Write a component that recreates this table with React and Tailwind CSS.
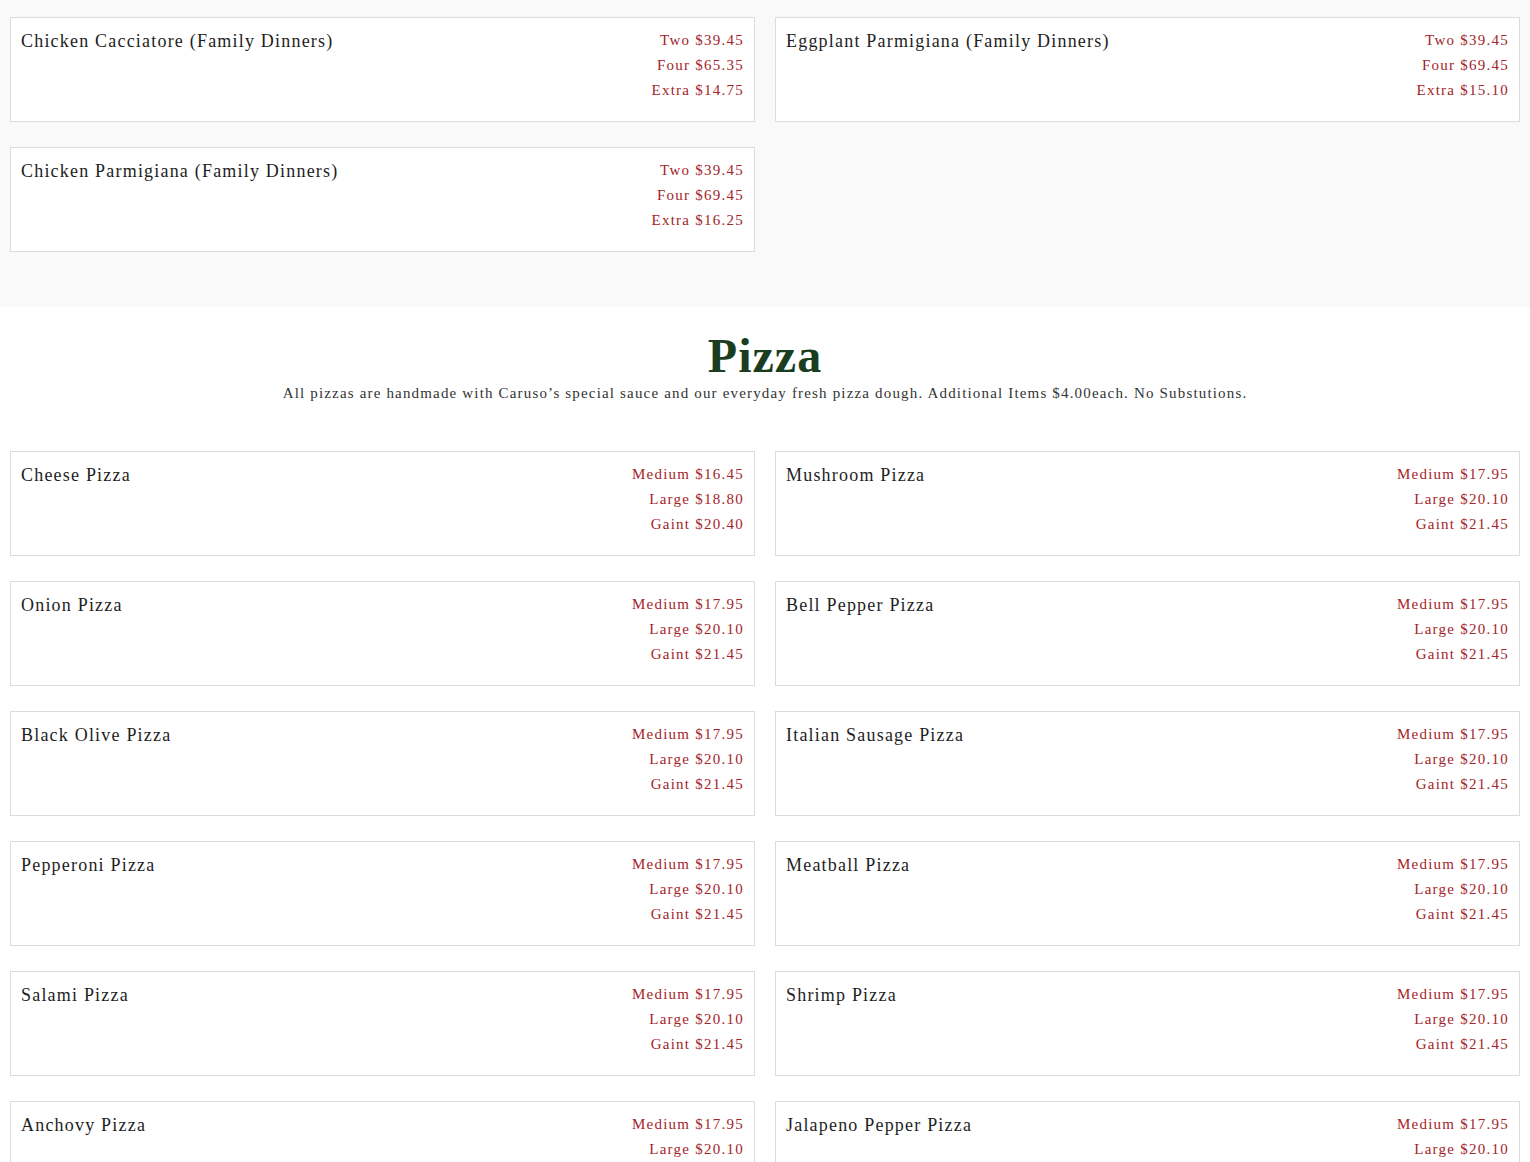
import React from "react";

const familyDinners = [
  {
    name: "Chicken Cacciatore (Family Dinners)",
    prices: ["Two $39.45", "Four $65.35", "Extra $14.75"],
  },
  {
    name: "Eggplant Parmigiana (Family Dinners)",
    prices: ["Two $39.45", "Four $69.45", "Extra $15.10"],
  },
  {
    name: "Chicken Parmigiana (Family Dinners)",
    prices: ["Two $39.45", "Four $69.45", "Extra $16.25"],
  },
];

const std = ["Medium $17.95", "Large $20.10", "Gaint $21.45"];

const pizzas = [
  { name: "Cheese Pizza", prices: ["Medium $16.45", "Large $18.80", "Gaint $20.40"] },
  { name: "Mushroom Pizza", prices: std },
  { name: "Onion Pizza", prices: std },
  { name: "Bell Pepper Pizza", prices: std },
  { name: "Black Olive Pizza", prices: std },
  { name: "Italian Sausage Pizza", prices: std },
  { name: "Pepperoni Pizza", prices: std },
  { name: "Meatball Pizza", prices: std },
  { name: "Salami Pizza", prices: std },
  { name: "Shrimp Pizza", prices: std },
  { name: "Anchovy Pizza", prices: std },
  { name: "Jalapeno Pepper Pizza", prices: std },
];

const MenuCard = ({ item }) => (
  <div className="flex h-[105px] justify-between border border-[#dcdcdc] bg-white px-[10px] pt-[10px]">
    <div className="text-[18px] leading-[27px] tracking-[1.2px] text-[#1e1e1e]">
      {item.name}
    </div>
    <div className="flex flex-col items-end">
      {item.prices.map((p) => (
        <div key={p} className="text-[15px] leading-[25px] tracking-[1.25px] text-[#a3242a]">
          {p}
        </div>
      ))}
    </div>
  </div>
);

const CardGrid = ({ items }) => (
  <div className="grid grid-cols-2 gap-x-[20px] gap-y-[25px] px-[10px]">
    {items.map((item) => (
      <MenuCard key={item.name} item={item} />
    ))}
  </div>
);

export default function App() {
  return (
    <div className="min-h-screen bg-white font-['Liberation_Serif',serif]">
      {/* tail end of the family dinners section */}
      <section className="bg-[#f9f9f9] pt-[17px] pb-[55px]">
        <CardGrid items={familyDinners} />
      </section>

      <section className="bg-white pb-[40px]">
        <div className="pt-[23px] text-center">
          <h2 className="text-[48px] font-bold leading-[52px] tracking-[1px] text-[#1b3d1f]">
            Pizza
          </h2>
          <p className="-mt-[1px] text-[15px] leading-[24px] tracking-[1.17px] text-[#333]">
            All pizzas are handmade with Caruso’s special sauce and our everyday fresh pizza
            dough. Additional Items $4.00each. No Substutions.
          </p>
        </div>
        <div className="mt-[46px]">
          <CardGrid items={pizzas} />
        </div>
      </section>
    </div>
  );
}
